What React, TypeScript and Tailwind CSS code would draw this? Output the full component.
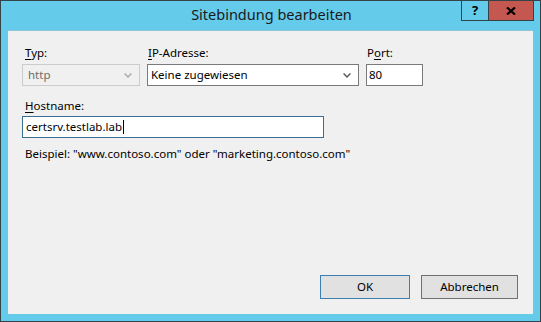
import React from 'react';

const Chevron: React.FC<{ color: string }> = ({ color }) => (
  <svg width="8" height="5" viewBox="0 0 8 5" className="shrink-0">
    <path d="M0.6 0.6 L4 4 L7.4 0.6" fill="none" stroke={color} strokeWidth="1.4" />
  </svg>
);

export default function App() {
  return (
    <div
      className="w-[541px] h-[322px] bg-[#65cbea] border border-[#33434a] flex flex-col text-[11.5px] text-black"
      style={{ fontFamily: '"Segoe UI", "Noto Sans", sans-serif' }}
    >
      {/* Title bar */}
      <div className="relative h-[29px] shrink-0 flex items-center justify-center">
        <span className="text-[14.5px] text-[#1a1a1a] pb-[1px] pl-[2px]">Sitebindung bearbeiten</span>
        <div className="absolute top-[-1px] right-[6px] flex">
          <button className="w-[27px] h-[21px] border border-[#33434a] border-r-0 flex items-center justify-center font-bold text-[13px] leading-none">
            ?
          </button>
          <button className="w-[46px] h-[21px] bg-[#c4574f] border border-[#33434a] flex items-center justify-center">
            <svg width="10" height="8" viewBox="0 0 10 8">
              <path d="M1 0.5 L9 7.5 M9 0.5 L1 7.5" stroke="#000" strokeWidth="2.2" />
            </svg>
          </button>
        </div>
      </div>

      {/* Client area */}
      <div className="flex-1 mx-[7px] mb-[7px] bg-[#f0f0f0] border-t border-[#8fc4da] flex flex-col pl-[14px] pr-[15px] pt-[14px] pb-[15px]">
        <div className="flex gap-[7px]">
          <div className="w-[118px]">
            <div className="pl-[3px] h-[16px] leading-[16px] mb-[3px]">
              <span className="underline underline-offset-2">T</span>yp:
            </div>
            <div className="h-[22px] border border-[#cccccc] bg-[#f0f0f0] flex items-center justify-between pl-[5px] pr-[7px] text-[#6d6d6d]">
              <span>http</span>
              <Chevron color="#a8a8a8" />
            </div>
          </div>
          <div className="w-[212px]">
            <div className="pl-[1px] h-[16px] leading-[16px] mb-[3px]">
              <span className="underline underline-offset-2">I</span>P-Adresse:
            </div>
            <div className="h-[22px] border border-[#7a7a7a] bg-white flex items-center justify-between pl-[3px] pr-[7px]">
              <span>Keine zugewiesen</span>
              <Chevron color="#555" />
            </div>
          </div>
          <div className="w-[57px]">
            <div className="pl-[1px] h-[16px] leading-[16px] mb-[3px]">
              P<span className="underline underline-offset-2">o</span>rt:
            </div>
            <div className="h-[22px] border border-[#7a7a7a] bg-white flex items-center pl-[2px]">
              80
            </div>
          </div>
        </div>

        <div className="pl-[3px] h-[16px] leading-[16px] mt-[12px] mb-[2px]">
          <span className="underline underline-offset-2">H</span>ostname:
        </div>
        <div className="w-[302px] h-[22px] border border-[#3c6e94] bg-white flex items-center pl-[3px]">
          <span>certsrv.testlab.lab</span>
          <span className="w-px h-[14px] bg-black ml-[1px]" />
        </div>

        <div className="pl-[3px] mt-[8px] h-[16px] leading-[16px]">
          Beispiel: "www.contoso.com" oder "marketing.contoso.com"
        </div>

        <div className="mt-auto flex justify-end gap-[11px]">
          <button className="w-[90px] h-[24px] border border-[#3c7fb1] bg-[#e1e1e1] flex items-center justify-center">
            OK
          </button>
          <button className="w-[97px] h-[24px] border border-[#707070] bg-[#e1e1e1] flex items-center justify-center">
            Abbrechen
          </button>
        </div>
      </div>
    </div>
  );
}
